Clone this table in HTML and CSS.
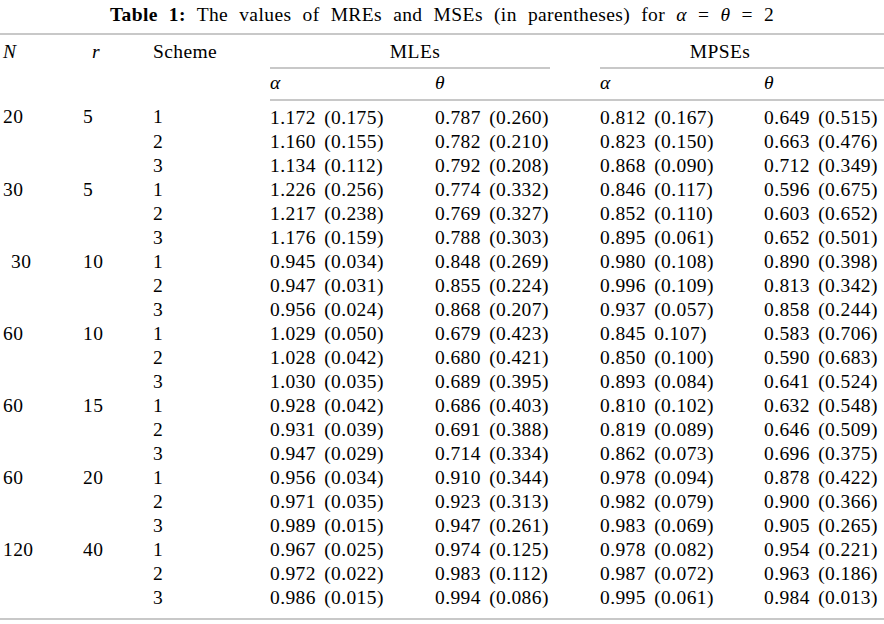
FILE: index.html
```html
<!DOCTYPE html>
<html lang="en">
<head>
<meta charset="utf-8">
<title>Table 1</title>
<link rel="stylesheet" href="styles.css">
</head>
<body>
<div class="title"><b>Table 1:</b> The values of MREs and MSEs (in parentheses) for <i>α</i> = <i>θ</i> = 2</div>
<table class="results">
  <colgroup>
    <col class="c-n"><col class="c-r"><col class="c-s"><col class="c-v"><col class="c-v"><col class="c-v2"><col class="c-last">
  </colgroup>
  <thead>
    <tr class="h1">
      <th rowspan="2" class="first"><i>N</i></th>
      <th rowspan="2" class="rh"><i>r</i></th>
      <th rowspan="2">Scheme</th>
      <th colspan="2" class="group"><div class="cline mle">MLEs</div></th>
      <th colspan="2" class="group"><div class="cline mpse">MPSEs</div></th>
    </tr>
    <tr class="h2">
      <th><i>α</i></th><th><i>θ</i></th><th><i>α</i></th><th><i>θ</i></th>
    </tr>
  </thead>
  <tbody>
    <tr class="top"><td class="first">20</td><td>5</td><td>1</td><td>1.172 (0.175)</td><td>0.787 (0.260)</td><td>0.812 (0.167)</td><td>0.649 (0.515)</td></tr>
    <tr><td class="first"></td><td></td><td>2</td><td>1.160 (0.155)</td><td>0.782 (0.210)</td><td>0.823 (0.150)</td><td>0.663 (0.476)</td></tr>
    <tr><td class="first"></td><td></td><td>3</td><td>1.134 (0.112)</td><td>0.792 (0.208)</td><td>0.868 (0.090)</td><td>0.712 (0.349)</td></tr>
    <tr><td class="first">30</td><td>5</td><td>1</td><td>1.226 (0.256)</td><td>0.774 (0.332)</td><td>0.846 (0.117)</td><td>0.596 (0.675)</td></tr>
    <tr><td class="first"></td><td></td><td>2</td><td>1.217 (0.238)</td><td>0.769 (0.327)</td><td>0.852 (0.110)</td><td>0.603 (0.652)</td></tr>
    <tr><td class="first"></td><td></td><td>3</td><td>1.176 (0.159)</td><td>0.788 (0.303)</td><td>0.895 (0.061)</td><td>0.652 (0.501)</td></tr>
    <tr><td class="first indent">30</td><td>10</td><td>1</td><td>0.945 (0.034)</td><td>0.848 (0.269)</td><td>0.980 (0.108)</td><td>0.890 (0.398)</td></tr>
    <tr><td class="first"></td><td></td><td>2</td><td>0.947 (0.031)</td><td>0.855 (0.224)</td><td>0.996 (0.109)</td><td>0.813 (0.342)</td></tr>
    <tr><td class="first"></td><td></td><td>3</td><td>0.956 (0.024)</td><td>0.868 (0.207)</td><td>0.937 (0.057)</td><td>0.858 (0.244)</td></tr>
    <tr><td class="first">60</td><td>10</td><td>1</td><td>1.029 (0.050)</td><td>0.679 (0.423)</td><td>0.845 0.107)</td><td>0.583 (0.706)</td></tr>
    <tr><td class="first"></td><td></td><td>2</td><td>1.028 (0.042)</td><td>0.680 (0.421)</td><td>0.850 (0.100)</td><td>0.590 (0.683)</td></tr>
    <tr><td class="first"></td><td></td><td>3</td><td>1.030 (0.035)</td><td>0.689 (0.395)</td><td>0.893 (0.084)</td><td>0.641 (0.524)</td></tr>
    <tr><td class="first">60</td><td>15</td><td>1</td><td>0.928 (0.042)</td><td>0.686 (0.403)</td><td>0.810 (0.102)</td><td>0.632 (0.548)</td></tr>
    <tr><td class="first"></td><td></td><td>2</td><td>0.931 (0.039)</td><td>0.691 (0.388)</td><td>0.819 (0.089)</td><td>0.646 (0.509)</td></tr>
    <tr><td class="first"></td><td></td><td>3</td><td>0.947 (0.029)</td><td>0.714 (0.334)</td><td>0.862 (0.073)</td><td>0.696 (0.375)</td></tr>
    <tr><td class="first">60</td><td>20</td><td>1</td><td>0.956 (0.034)</td><td>0.910 (0.344)</td><td>0.978 (0.094)</td><td>0.878 (0.422)</td></tr>
    <tr><td class="first"></td><td></td><td>2</td><td>0.971 (0.035)</td><td>0.923 (0.313)</td><td>0.982 (0.079)</td><td>0.900 (0.366)</td></tr>
    <tr><td class="first"></td><td></td><td>3</td><td>0.989 (0.015)</td><td>0.947 (0.261)</td><td>0.983 (0.069)</td><td>0.905 (0.265)</td></tr>
    <tr><td class="first">120</td><td>40</td><td>1</td><td>0.967 (0.025)</td><td>0.974 (0.125)</td><td>0.978 (0.082)</td><td>0.954 (0.221)</td></tr>
    <tr><td class="first"></td><td></td><td>2</td><td>0.972 (0.022)</td><td>0.983 (0.112)</td><td>0.987 (0.072)</td><td>0.963 (0.186)</td></tr>
    <tr class="bottom"><td class="first"></td><td></td><td>3</td><td>0.986 (0.015)</td><td>0.994 (0.086)</td><td>0.995 (0.061)</td><td>0.984 (0.013)</td></tr>
  </tbody>
</table>
</body>
</html>
```
FILE: styles.css
```css
html, body {
  margin: 0;
  padding: 0;
  background: #ffffff;
}
body {
  width: 884px;
  font-family: "Liberation Serif", "Times New Roman", serif;
  font-size: 19.5px;
  color: #000000;
  letter-spacing: 0.4px;
  word-spacing: 3px;
}
.title {
  text-align: center;
  line-height: 28px;
  padding-top: 1px;
  height: 32px;
  word-spacing: 5.8px;
}
.results {
  width: 884px;
  table-layout: fixed;
  border-collapse: collapse;
  border-top: 2px solid #c8c8c8;
  border-bottom: 2px solid #c8c8c8;
}
.c-n { width: 83px; }
.c-r { width: 70px; }
.c-s { width: 117px; }
.c-v { width: 165px; }
.c-v2 { width: 164px; }
.c-last { width: 120px; }
th, td {
  padding: 0;
  text-align: left;
  vertical-align: top;
  font-weight: normal;
  line-height: 24px;
  white-space: nowrap;
}
.first { padding-left: 3px; }
.indent { padding-left: 11px; }
.rh { padding-left: 9px; }
.h1 th { padding-top: 5px; }
.group { padding-bottom: 0; }
.cline {
  text-align: center;
  padding-bottom: 3px;
  border-bottom: 2px solid #c8c8c8;
}
.mle { margin-right: 50px; padding-left: 10px; }
.mpse { padding-right: 44px; }
.h2 th {
  padding-top: 2px;
  padding-bottom: 4px;
  border-bottom: 2px solid #c8c8c8;
}
.top td { padding-top: 5px; }
.bottom td { padding-bottom: 8px; }
```
